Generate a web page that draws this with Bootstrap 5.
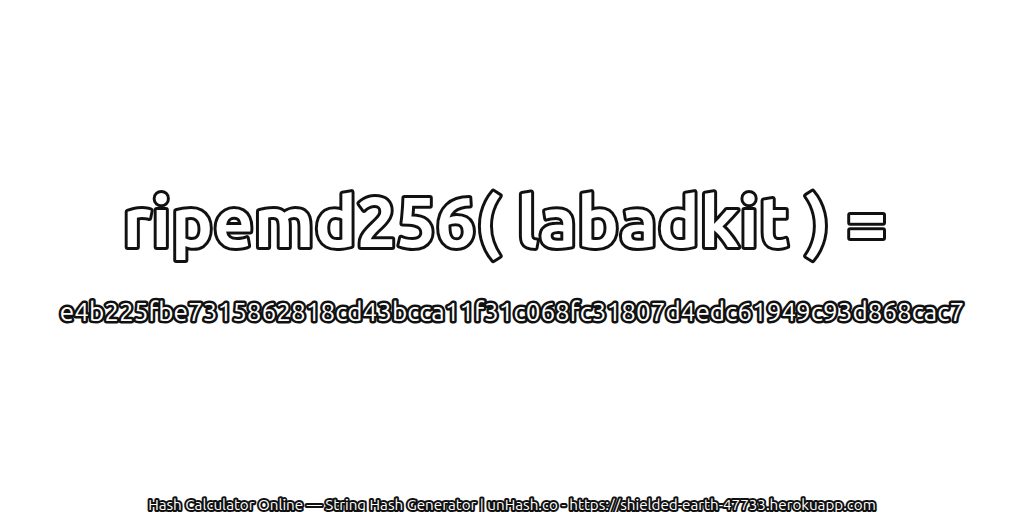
<!DOCTYPE html>
<html><head><meta charset="utf-8">
<link href="https://cdn.jsdelivr.net/npm/bootstrap@5.3.0/dist/css/bootstrap.min.css" rel="stylesheet">
<style>
html,body{height:512px;overflow:hidden;background:#fff}
.stage{height:512px}
.art{display:block;width:1024px;overflow:visible}
.art text{font-family:"Ubuntu","Noto Sans","DejaVu Sans",sans-serif;fill:#fff;stroke:#111;stroke-linejoin:round;paint-order:stroke fill;text-anchor:middle}
.ttl{font-size:70.4px;font-weight:700;stroke-width:6px}
.hsh{font-size:26.1px;stroke-width:5px}
.foot{font-size:15.2px;stroke-width:4px}
</style></head><body>
<div class="stage d-flex flex-column">
<svg class="art mt-auto" height="512" viewBox="0 0 1024 512" role="img">
<text class="ttl" x="504.5" y="247">ripemd256( labadkit ) =</text>
<text class="hsh" x="512" y="321">e4b225fbe7315862818cd43bcca11f31c068fc31807d4edc61949c93d868cac7</text>
<text class="foot" x="512" y="510">Hash Calculator Online — String Hash Generator | unHash.co - https://shielded-earth-47733.herokuapp.com</text>
</svg>
</div>
<script src="https://cdn.jsdelivr.net/npm/bootstrap@5.3.0/dist/js/bootstrap.bundle.min.js"></script>
</body></html>
